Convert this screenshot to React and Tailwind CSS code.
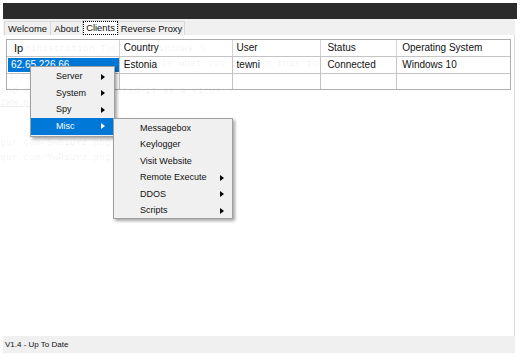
import React from 'react';

const cols = [
  { label: 'Ip', w: 'w-[113px]', pad: 'pl-[7px]' },
  { label: 'Country', w: 'w-[113px]', pad: 'pl-[4px]' },
  { label: 'User', w: 'w-[89px]', pad: 'pl-[4px]' },
  { label: 'Status', w: 'w-[76px]', pad: 'pl-[6px]' },
  { label: 'Operating System', w: 'w-[113px]', pad: 'pl-[5px]' },
];

const row = ['62.65.226.66', 'Estonia', 'tewni', 'Connected', 'Windows 10'];

function Arrow({ white }) {
  return (
    <span
      className={`w-0 h-0 border-y-[3.5px] border-y-transparent border-l-[4px] ${white ? 'border-l-white' : 'border-l-black'}`}
    />
  );
}

function MenuItem({ label, sub, active, padL, padR }) {
  return (
    <div className={`h-[16.5px] flex items-center justify-between ${padL} ${padR} ${active ? 'bg-[#0078d7] text-white' : 'text-[#111]'}`}>
      <span>{label}</span>
      {sub && <Arrow white={active} />}
    </div>
  );
}

function GhostText() {
  // the page behind the window shows faintly through it
  const lines = [
    { top: 'top-[44px]', left: 'left-[13px]', t: 'Administration Tool for Windows.\\' },
    { top: 'top-[59px]', left: 'left-[68px]', t: 'be not responsible what you do with this tool.\\' },
    { top: 'top-[72px]', left: 'left-[8px]', t: '3/72' },
    { top: 'top-[86px]', left: 'left-[0px]', t: 'and so some AVs detected it as a virus.\\' },
    { top: 'top-[98px]', left: 'left-[0px]', t: '2WW.png', u: true },
    { top: 'top-[138px]', left: 'left-[0px]', t: 'gur.com/5wRiUYz.png "Screenshot"' },
    { top: 'top-[153px]', left: 'left-[0px]', t: 'gur.com/5wRiUYz.png "Screenshot"' },
  ];
  return (
    <div className="absolute inset-0 pointer-events-none font-['Liberation_Mono',monospace] text-[9.7px] text-black/[0.07]">
      {lines.map((l, i) => (
        <div key={i} className={`absolute whitespace-pre ${l.top} ${l.left} ${l.u ? 'underline' : ''}`}>{l.t}</div>
      ))}
    </div>
  );
}

export default function App() {
  return (
    <div className="relative w-[521px] h-[358px] bg-white overflow-hidden font-['Liberation_Sans',Arial,sans-serif] text-black leading-none">
      <div className="h-[3px]" />
      <div className="ml-[3px] w-[514px] h-[16px] bg-[#2b2b2b]" />

      <div className="ml-[3px] w-[512px] h-[334px] bg-[#f0f0f0] flex flex-col">
        {/* tabs */}
        <div className="h-[16px] flex items-end pl-[1px] text-[9.4px] text-[#111]">
          <div className="w-[47px] h-[14px] border border-b-0 border-[#d9d9d9] flex items-center justify-center">Welcome</div>
          <div className="w-[33px] h-[14px] -ml-px border border-b-0 border-[#d9d9d9] flex items-center justify-center">About</div>
          <div className="w-[37px] h-[15px] -ml-px bg-white border border-b-0 border-[#d9d9d9] flex items-center justify-center">
            <span className="px-[2px] py-[1px] border border-dotted border-black">Clients</span>
          </div>
          <div className="w-[67px] h-[14px] -ml-px border border-b-0 border-[#d9d9d9] flex items-center justify-center">Reverse Proxy</div>
        </div>

        {/* tab page */}
        <div className="flex-1 bg-white border-r border-[#d9d9d9] pt-[4px] pl-[3px]">
          <div className="w-[505px] border border-[#adadad] text-[10px] text-[#111]">
            <div className="h-[17px] flex border-b border-[#c4c4c4]">
              {cols.map((c, i) => (
                <div key={c.label} className={`${c.w} ${c.pad} flex items-center ${i < 4 ? 'border-r border-[#d4d4d4]' : ''} ${i === 0 ? 'text-[11px]' : ''}`}>{c.label}</div>
              ))}
            </div>
            <div className="h-[17px] flex border-b border-[#c4c4c4]">
              {cols.map((c, i) => (
                <div key={c.label} className={`${c.w} flex items-center ${i < 4 ? 'border-r border-[#c4c4c4]' : ''} ${i === 0 ? 'pl-[1px] py-[1px]' : c.pad}`}>
                  {i === 0
                    ? <div className="w-full h-full bg-[#0078d7] text-white flex items-center pl-[3px]">{row[i]}</div>
                    : row[i]}
                </div>
              ))}
            </div>
            <div className="h-[15px] flex">
              {cols.map((c, i) => (
                <div key={c.label} className={`${c.w} ${i < 4 ? 'border-r border-[#c4c4c4]' : ''}`} />
              ))}
            </div>
          </div>
        </div>

        {/* status bar */}
        <div className="h-[17px] flex items-center pl-[2px] text-[8px] text-[#111]">V1.4 - Up To Date</div>
      </div>

      <GhostText />

      {/* context menu */}
      <div className="absolute left-[30px] top-[66px] w-[85px] h-[71px] bg-[#f0f0f0] border border-[#a0a0a0] py-[1.5px] text-[9px] shadow-[2px_2px_3px_rgba(0,0,0,0.35)]">
        <MenuItem label="Server" sub padL="pl-[25px]" padR="pr-[9px]" />
        <MenuItem label="System" sub padL="pl-[25px]" padR="pr-[9px]" />
        <MenuItem label="Spy" sub padL="pl-[25px]" padR="pr-[9px]" />
        <MenuItem label="Misc" sub active padL="pl-[25px]" padR="pr-[9px]" />
      </div>

      {/* submenu */}
      <div className="absolute left-[113px] top-[118px] w-[120px] h-[101px] bg-[#f0f0f0] border border-[#a0a0a0] pt-[1px] text-[9px] shadow-[2px_2px_3px_rgba(0,0,0,0.35)]">
        <MenuItem label="Messagebox" padL="pl-[26px]" padR="pr-[8px]" />
        <MenuItem label="Keylogger" padL="pl-[26px]" padR="pr-[8px]" />
        <MenuItem label="Visit Website" padL="pl-[26px]" padR="pr-[8px]" />
        <MenuItem label="Remote Execute" sub padL="pl-[26px]" padR="pr-[8px]" />
        <MenuItem label="DDOS" sub padL="pl-[26px]" padR="pr-[8px]" />
        <MenuItem label="Scripts" sub padL="pl-[26px]" padR="pr-[8px]" />
      </div>
    </div>
  );
}
